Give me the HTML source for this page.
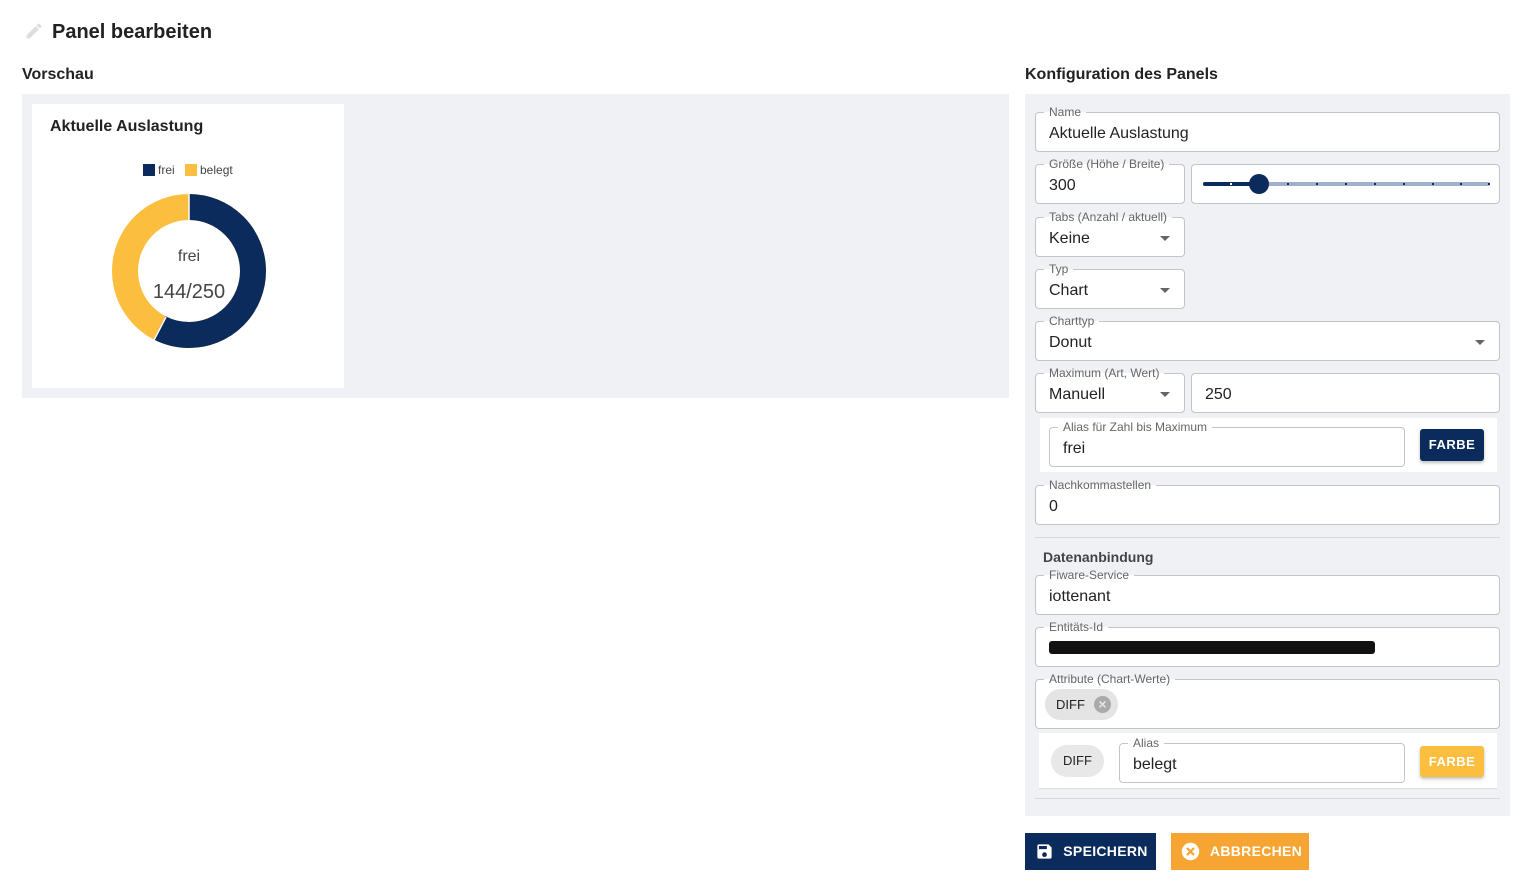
<!DOCTYPE html>
<html><head><meta charset="utf-8"><style>
*{box-sizing:border-box;margin:0;padding:0}
body{width:1532px;height:888px;background:#fff;font-family:"Liberation Sans",Arial,sans-serif;color:#222;position:relative;overflow:hidden}
.a{position:absolute}
.f{position:absolute;border:1px solid #c4c4c4;border-radius:4px;background:#fff}
.f .l{position:absolute;left:8px;top:-8px;font-size:12px;color:#666;padding:0 5px;background:linear-gradient(#f0f1f5 50%,#fff 50%);line-height:14px;white-space:nowrap}
.f .l.w{background:#fff}
.f .v{position:absolute;left:13px;top:12px;font-size:16px;color:#222}
.f .dd{position:absolute;right:14px;top:18px;width:0;height:0;border-left:5px solid transparent;border-right:5px solid transparent;border-top:5px solid #666}
.btn{position:absolute;font-weight:bold;font-size:13px;color:#fff;text-align:center;border-radius:3px;letter-spacing:.5px}
.dot{position:absolute;top:18px;width:2px;height:2px;background:#0a2b5c}
</style></head><body>
<svg class="a" style="left:24px;top:21px" width="20" height="20" viewBox="0 0 24 24"><path d="M3 17.25V21h3.75L17.81 9.94l-3.75-3.75L3 17.25zM20.71 7.04a1 1 0 0 0 0-1.41l-2.34-2.34a1 1 0 0 0-1.41 0l-1.83 1.83 3.75 3.75 1.83-1.83z" fill="#ddd"/></svg>
<div class="a" style="left:52px;top:21px;font-size:20px;font-weight:bold">Panel bearbeiten</div>
<div class="a" style="left:22px;top:66px;font-size:16px;font-weight:bold">Vorschau</div>
<div class="a" style="left:1025px;top:66px;font-size:16px;font-weight:bold">Konfiguration des Panels</div>
<div class="a" style="left:22px;top:94px;width:987px;height:304px;background:#f0f1f5"></div>
<div class="a" style="left:32px;top:104px;width:312px;height:284px;background:#fff"></div>
<div class="a" style="left:50px;top:118px;font-size:16px;font-weight:bold">Aktuelle Auslastung</div>
<div class="a" style="left:143px;top:164px;width:12px;height:12px;background:#0a2b5c"></div>
<div class="a" style="left:158px;top:163px;font-size:12px;color:#444">frei</div>
<div class="a" style="left:185px;top:164px;width:12px;height:12px;background:#fbbe3e"></div>
<div class="a" style="left:200px;top:163px;font-size:12px;color:#444">belegt</div>
<svg class="a" style="left:109px;top:191px" width="160" height="160" viewBox="0 0 160 160">
<g transform="rotate(-90 80 80)">
<circle cx="80" cy="80" r="64" fill="none" stroke="#fbbe3e" stroke-width="26"/>
<circle cx="80" cy="80" r="64" fill="none" stroke="#0a2b5c" stroke-width="26" stroke-dasharray="231.6 402.1"/>
</g>
<line x1="80" y1="3" x2="80" y2="29" stroke="#fff" stroke-width="1.5"/>
<line x1="45" y1="149" x2="57" y2="126" stroke="#fff" stroke-width="1.5"/>
</svg>
<div class="a" style="left:139px;top:248px;width:100px;text-align:center;font-size:16px;color:#444">frei</div>
<div class="a" style="left:129px;top:281px;width:120px;text-align:center;font-size:20px;color:#444">144/250</div>

<div class="a" style="left:1025px;top:94px;width:485px;height:722px;background:#f0f1f5"></div>
<div class="f" style="left:1035px;top:112px;width:465px;height:40px"><span class="l">Name</span><span class="v">Aktuelle Auslastung</span></div>
<div class="f" style="left:1035px;top:164px;width:150px;height:40px"><span class="l">Größe (Höhe / Breite)</span><span class="v">300</span></div>
<div class="f" style="left:1191px;top:164px;width:309px;height:40px">
<div class="a" style="left:11px;top:17px;width:287px;height:4px;background:#9fb0c8;border-radius:2px"></div>
<div class="a" style="left:11px;top:17px;width:57px;height:4px;background:#0a2b5c;border-radius:2px"></div>
<div class="dot" style="left:38px;background:#fff"></div><div class="dot" style="left:95px"></div><div class="dot" style="left:124px"></div><div class="dot" style="left:153px"></div><div class="dot" style="left:182px"></div><div class="dot" style="left:211px"></div><div class="dot" style="left:240px"></div><div class="dot" style="left:268px"></div><div class="dot" style="left:296px"></div>
<div class="a" style="left:57px;top:9px;width:20px;height:20px;background:#0a2b5c;border-radius:50%"></div>
</div>
<div class="f" style="left:1035px;top:217px;width:150px;height:40px"><span class="l">Tabs (Anzahl / aktuell)</span><span class="v">Keine</span><span class="dd"></span></div>
<div class="f" style="left:1035px;top:269px;width:150px;height:40px"><span class="l">Typ</span><span class="v">Chart</span><span class="dd"></span></div>
<div class="f" style="left:1035px;top:321px;width:465px;height:40px"><span class="l">Charttyp</span><span class="v">Donut</span><span class="dd"></span></div>
<div class="f" style="left:1035px;top:373px;width:150px;height:40px"><span class="l">Maximum (Art, Wert)</span><span class="v">Manuell</span><span class="dd"></span></div>
<div class="f" style="left:1191px;top:373px;width:309px;height:40px"><span class="v">250</span></div>
<div class="a" style="left:1040px;top:418px;width:457px;height:54px;background:#fff"></div>
<div class="f" style="left:1049px;top:427px;width:356px;height:40px"><span class="l w">Alias für Zahl bis Maximum</span><span class="v">frei</span></div>
<div class="btn" style="left:1420px;top:429px;width:64px;height:32px;line-height:32px;background:#0a2b5c;box-shadow:0 2px 3px rgba(0,0,0,.25)">FARBE</div>
<div class="f" style="left:1035px;top:485px;width:465px;height:40px"><span class="l">Nachkommastellen</span><span class="v">0</span></div>
<div class="a" style="left:1035px;top:537px;width:465px;height:1px;background:#d8d8d8"></div>
<div class="a" style="left:1043px;top:549px;font-size:14px;font-weight:bold;color:#444">Datenanbindung</div>
<div class="f" style="left:1035px;top:575px;width:465px;height:40px"><span class="l">Fiware-Service</span><span class="v">iottenant</span></div>
<div class="f" style="left:1035px;top:627px;width:465px;height:40px"><span class="l">Entitäts-Id</span><div class="a" style="left:13px;top:13px;width:326px;height:13px;background:#111;border-radius:3px"></div></div>
<div class="f" style="left:1035px;top:679px;width:465px;height:50px"><span class="l">Attribute (Chart-Werte)</span>
<div class="a" style="left:9px;top:9px;width:73px;height:31px;background:#e4e4e4;border-radius:16px;font-size:13px;line-height:31px;padding-left:11px">DIFF</div>
<div class="a" style="left:58px;top:16px;width:17px;height:17px;background:#aaa;border-radius:50%;color:#e4e4e4;font-size:14px;line-height:17px;text-align:center;font-weight:bold">×</div>
</div>
<div class="a" style="left:1039px;top:733px;width:458px;height:55px;background:#fff"></div>
<div class="a" style="left:1051px;top:745px;width:53px;height:32px;background:#e8e8e8;border-radius:16px;font-size:13px;line-height:32px;text-align:center">DIFF</div>
<div class="f" style="left:1119px;top:743px;width:286px;height:40px"><span class="l w">Alias</span><span class="v">belegt</span></div>
<div class="btn" style="left:1420px;top:746px;width:64px;height:31px;line-height:31px;background:#fbbe3e;box-shadow:0 2px 3px rgba(0,0,0,.25)">FARBE</div>
<div class="a" style="left:1039px;top:788px;width:458px;height:1px;background:#ddd"></div>
<div class="a" style="left:1035px;top:798px;width:465px;height:1px;background:#d8d8d8"></div>

<div class="btn" style="left:1025px;top:833px;width:131px;height:37px;line-height:37px;background:#0a2b5c;border-radius:0;font-size:14px;padding-left:30px;letter-spacing:.3px">SPEICHERN</div>
<svg class="a" style="left:1035px;top:842px" width="19" height="19" viewBox="0 0 24 24"><path d="M17 3H5a2 2 0 0 0-2 2v14a2 2 0 0 0 2 2h14a2 2 0 0 0 2-2V7l-4-4zm-5 16a3 3 0 1 1 0-6 3 3 0 0 1 0 6zm3-10H5V5h10v4z" fill="#fff"/></svg>
<div class="btn" style="left:1171px;top:833px;width:138px;height:37px;line-height:37px;background:#f7a532;border-radius:0;font-size:14px;padding-left:32px;letter-spacing:.3px">ABBRECHEN</div>
<svg class="a" style="left:1180px;top:841px" width="21" height="21" viewBox="0 0 24 24"><circle cx="12" cy="12" r="10" fill="#fff"/><path d="M8 8l8 8M16 8l-8 8" stroke="#f7a532" stroke-width="2.6"/></svg>
</body></html>
